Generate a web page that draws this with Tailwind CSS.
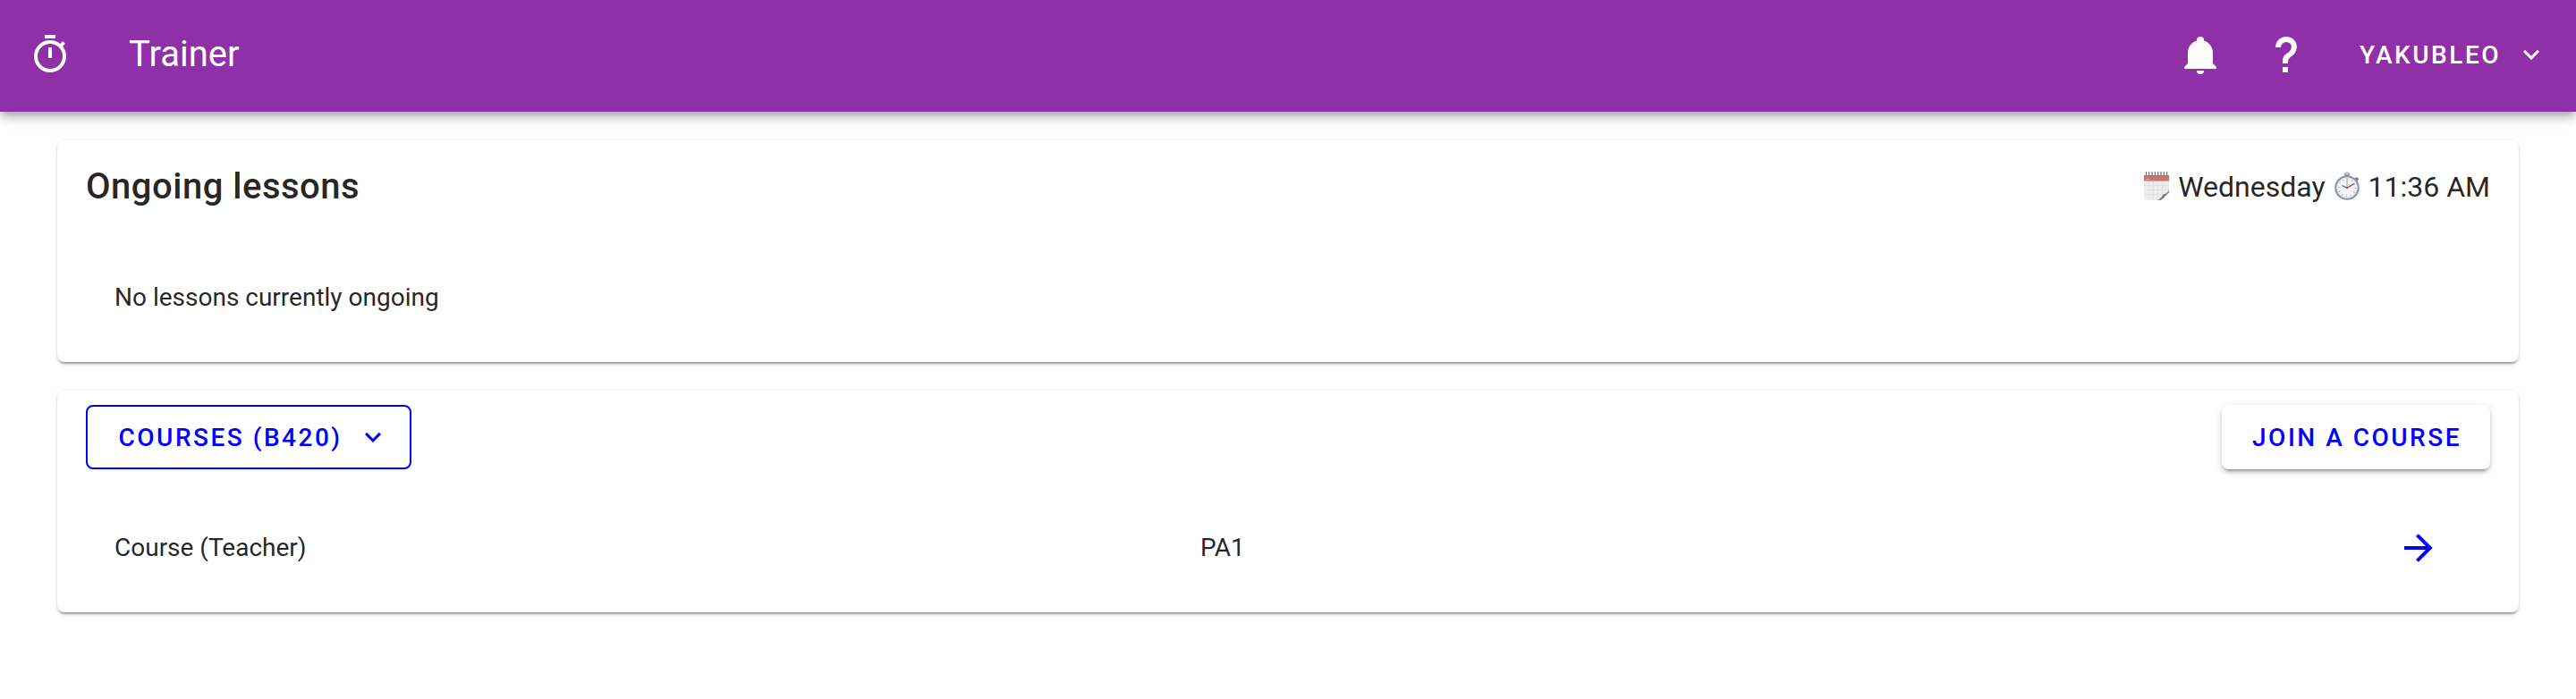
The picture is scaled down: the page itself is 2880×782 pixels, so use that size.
<!DOCTYPE html>
<html lang="en">
<head>
<meta charset="utf-8">
<title>Trainer</title>
<script src="https://cdn.jsdelivr.net/npm/@tailwindcss/browser@4"></script>
</head>
<body class="min-h-[782px] bg-white font-[Roboto,sans-serif] text-[28px] text-black/87 antialiased">
<header class="flex h-[125px] items-center bg-[#9030a8] pb-[3px] pl-8 pr-8 text-white shadow-[0_4px_8px_-2px_rgba(0,0,0,0.2),0_8px_10px_0_rgba(0,0,0,0.14),0_2px_20px_0_rgba(0,0,0,0.12)]">
  <svg class="size-12 fill-current" viewBox="0 0 24 24"><path d="M12,20A7,7 0 0,1 5,13A7,7 0 0,1 12,6A7,7 0 0,1 19,13A7,7 0 0,1 12,20M19.03,7.39L20.45,5.97C20,5.46 19.55,5 19.04,4.56L17.62,6C16.07,4.74 14.12,4 12,4A9,9 0 0,0 3,13A9,9 0 0,0 12,22C17,22 21,17.97 21,13C21,10.88 20.26,8.93 19.03,7.39M11,14H13V8H11M15,1H9V3H15V1Z"/></svg>
  <h1 class="ml-16 text-[40px] leading-[60px]">Trainer</h1>
  <nav class="ml-auto flex items-center">
    <svg class="size-12 fill-current" viewBox="0 0 24 24"><path d="M21,19V20H3V19L5,17V11C5,7.9 7.03,5.17 10,4.29C10,4.19 10,4.1 10,4A2,2 0 0,1 12,2A2,2 0 0,1 14,4C14,4.1 14,4.19 14,4.29C16.97,5.17 19,7.9 19,11V17L21,19M14,21A2,2 0 0,1 12,23A2,2 0 0,1 10,21"/></svg>
    <svg class="ml-12 size-12 fill-current" viewBox="0 0 24 24"><path d="M10,19H13V22H10V19M12,2C17.35,2.22 19.68,7.62 16.5,11.67C15.67,12.67 14.33,13.33 13.67,14.17C13,15 13,16 13,17H10C10,15.33 10,13.92 10.67,12.92C11.33,11.92 12.67,11.33 13.5,10.67C15.92,8.43 15.32,5.26 12,5A3,3 0 0,0 9,8H6A6,6 0 0,1 12,2Z"/></svg>
    <button class="ml-[58px] flex items-center font-medium tracking-[2.5px]"><span class="pt-[2px]">YAKUBLEO</span><svg class="ml-4 size-9 fill-current" viewBox="0 0 24 24"><path d="M7.41,8.58L12,13.17L16.59,8.58L18,10L12,16L6,10L7.41,8.58Z"/></svg></button>
  </nav>
</header>
<main class="flex flex-col gap-8 px-16 pt-8">
  <section class="flex h-[248px] flex-col rounded-lg bg-white px-8 shadow-[0_4px_2px_-2px_rgba(0,0,0,0.2),0_2px_2px_0_rgba(0,0,0,0.14),0_2px_6px_0_rgba(0,0,0,0.12)]">
    <div class="flex h-[104px] items-center justify-between">
      <h2 class="text-[40px] font-medium leading-[64px] tracking-[0.5px]">Ongoing lessons</h2>
      <div class="flex items-center text-[32px] leading-[48px]">
        <svg class="mb-[2px] mr-[10px] h-8 w-7" viewBox="0 0 28 32" fill="none">
          <path fill="#ededed" d="M0 4h28v28H0z"/>
          <path stroke="#e2e2e2" d="M0 15.5h28M0 20.500h28M0 25.500h28M5.500 11v21M10.500 11v21M15.500 11v21M20.500 11v21"/>
          <path fill="#c9736e" d="M0 4h28v6.500H0z"/>
          <path stroke="#e4aaa6" d="M2 8.500h4"/>
          <path fill="#b9b9b9" d="M14 32c4-1 6-4 7-6 3-1 5-3 7-6v3l-9 9z"/>
          <path fill="#707070" d="M16 31.500c3-1.500 5-4 6-6 3-.5 5-2 6-3.500v1.500c-3 2-4 3-5 4.500-2 2-4 3.500-5 4z"/>
          <path fill="#fafafa" d="M28 24v8h-9c4-2 6-5 9-8z"/>
          <path stroke="#777" stroke-width="1.300" d="M2.500 0v5M5.800 0v5M9.100 0v5M12.400 0v5M15.700 0v5M19 0v5M22.300 0v5M25.600 0v5"/>
        </svg>
        <span>Wednesday</span>
        <svg class="mb-[2px] ml-[10px] mr-[10px] h-8 w-7" viewBox="0 0 28 32" fill="none">
          <rect x="11" y=".5" width="6" height="5" rx="2" fill="#9ba0aa"/>
          <path d="M12.500 2h3" stroke="#dfe2e6" stroke-width="1.500"/>
          <path d="M22 10l3-3" stroke="#9aa0ab" stroke-width="2"/>
          <path d="M23.500 7.200l3 2" stroke="#6e7683" stroke-width="2.600"/>
          <circle cx="14" cy="18" r="12.700" fill="#f6f6f6" stroke="#8d95a3" stroke-width="2.200"/>
          <circle cx="14" cy="18" r="11.300" stroke="#d3d7de" stroke-width="1"/>
          <circle cx="14" cy="18" r="9.300" stroke="#9b9b9b" stroke-width="1.600" stroke-dasharray=".9 3.970"/>
          <path d="M14 7.500V20" stroke="#edab97" stroke-width="1.500"/>
          <path d="M8.500 15.500L14 18.300L22 13.500" stroke="#555" stroke-width="1.300"/>
        </svg>
        <span>11:36 AM</span>
      </div>
    </div>
    <p class="px-8 pt-[51px] leading-[42px]">No lessons currently ongoing</p>
  </section>
  <section class="flex h-[248px] flex-col rounded-lg bg-white px-8 pt-4 shadow-[0_4px_2px_-2px_rgba(0,0,0,0.2),0_2px_2px_0_rgba(0,0,0,0.14),0_2px_6px_0_rgba(0,0,0,0.12)]">
    <div class="flex items-center justify-between font-medium tracking-[2.5px] text-[#0000ff]">
      <button class="flex h-[72px] w-[364px] items-center rounded-lg border-2 border-[#0000ff] pl-[34.5px]"><span class="pt-[2px]">COURSES (B420)</span><svg class="ml-4 size-9 fill-current" viewBox="0 0 24 24"><path d="M7.41,8.58L12,13.17L16.59,8.58L18,10L12,16L6,10L7.41,8.58Z"/></svg></button>
      <button class="h-[72px] w-[300px] rounded-lg bg-white pl-[2px] pt-[2px] shadow-[0_6px_2px_-4px_rgba(0,0,0,0.2),0_4px_4px_0_rgba(0,0,0,0.14),0_2px_10px_0_rgba(0,0,0,0.12)]">JOIN A COURSE</button>
    </div>
    <div class="mt-10 grid h-24 grid-cols-[1214px_1fr_48px] items-center pl-8 pr-14">
      <span>Course (Teacher)</span>
      <span>PA1</span>
      <svg class="size-12 fill-[#0000ff]" viewBox="0 0 24 24"><path d="M4,11V13H16L10.500,18.500L11.920,19.920L19.840,12L11.920,4.080L10.500,5.500L16,11H4Z"/></svg>
    </div>
  </section>
</main>
</body>
</html>
